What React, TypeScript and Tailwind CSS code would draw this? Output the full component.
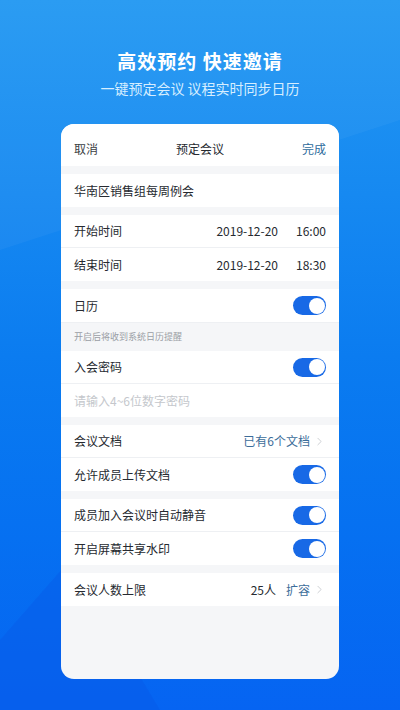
import { ChevronRight } from 'lucide-react';

const font = { fontFamily: '"Noto Sans CJK SC", "Noto Sans", sans-serif' };

function Toggle() {
  return (
    <div className="w-[33px] h-[19px] rounded-full bg-[#1869e6] flex items-center justify-end pr-[1.5px]">
      <div className="w-[16px] h-[16px] rounded-full bg-white" />
    </div>
  );
}

function Row({ label, right, border = true, muted = false }: { label: string; right?: React.ReactNode; border?: boolean; muted?: boolean }) {
  return (
    <div className={`h-[33px] flex items-center justify-between px-[13px] bg-white ${border ? 'border-b border-[#eef0f3]' : ''}`}>
      <span className={muted ? 'text-[12px] text-[#c4c7cc]' : 'text-[12px] text-[#262a30]'}>{label}</span>
      {right}
    </div>
  );
}

function Gap() {
  return <div className="h-[8px] bg-[#f5f6f8]" />;
}

export default function App() {
  return (
    <div style={font} className="relative w-[400px] h-[710px] overflow-hidden bg-gradient-to-b from-[#2398f2] via-[#0b7cf0] to-[#0664f2]">
      {/* diagonal decoration */}
      <svg className="absolute inset-0" width="400" height="710">
        <polygon points="0,250 400,120 400,0 0,0" fill="#ffffff" opacity="0.04" />
        <polygon points="0,710 0,640 70,560 160,710" fill="#0a55e6" opacity="0.35" />
      </svg>

      <div className="relative flex flex-col items-center pt-[47px]">
        <h1 className="text-[19px] font-semibold text-white tracking-[1px] leading-[28px]">高效预约 快速邀请</h1>
        <p className="mt-[3px] text-[14px] text-[#d6eeff] leading-[20px]">一键预定会议 议程实时同步日历</p>
      </div>

      <div className="relative mx-[61px] mt-[26px] w-[278px] h-[555px] rounded-[13px] bg-[#f5f6f8] overflow-hidden">
        <div className="h-[42px] flex items-end pb-[8px] justify-between px-[13px] bg-white text-[12px]">
          <span className="text-[#3a3e44]">取消</span>
          <span className="text-[#262a30]">预定会议</span>
          <span className="text-[#2d6b9c]">完成</span>
        </div>
        <Gap />
        <Row label="华南区销售组每周例会" border={false} />
        <Gap />
        <Row label="开始时间" right={<span className="text-[12px] text-[#262a30] flex gap-[18px]"><span>2019-12-20</span><span>16:00</span></span>} />
        <Row label="结束时间" border={false} right={<span className="text-[12px] text-[#262a30] flex gap-[18px]"><span>2019-12-20</span><span>18:30</span></span>} />
        <Gap />
        <Row label="日历" border={false} right={<Toggle />} />
        <div className="h-[29px] flex items-center px-[13px] text-[9px] text-[#9a9ea5] border-t border-[#eef0f3]">开启后将收到系统日历提醒</div>
        <Row label="入会密码" right={<Toggle />} />
        <Row label="请输入4~6位数字密码" muted border={false} />
        <Gap />
        <Row
          label="会议文档"
          right={
            <span className="flex items-center gap-[3px] text-[12px] text-[#3c6d9a]">
              已有6个文档
              <ChevronRight className="w-[13px] h-[13px] text-[#c2c5ca]" strokeWidth={1.5} />
            </span>
          }
        />
        <Row label="允许成员上传文档" border={false} right={<Toggle />} />
        <Gap />
        <Row label="成员加入会议时自动静音" right={<Toggle />} />
        <Row label="开启屏幕共享水印" border={false} right={<Toggle />} />
        <Gap />
        <Row
          label="会议人数上限"
          border={false}
          right={
            <span className="flex items-center text-[12px]">
              <span className="text-[#262a30] mr-[10px]">25人</span>
              <span className="text-[#3c6d9a] mr-[3px]">扩容</span>
              <ChevronRight className="w-[13px] h-[13px] text-[#c2c5ca]" strokeWidth={1.5} />
            </span>
          }
        />
      </div>
    </div>
  );
}
